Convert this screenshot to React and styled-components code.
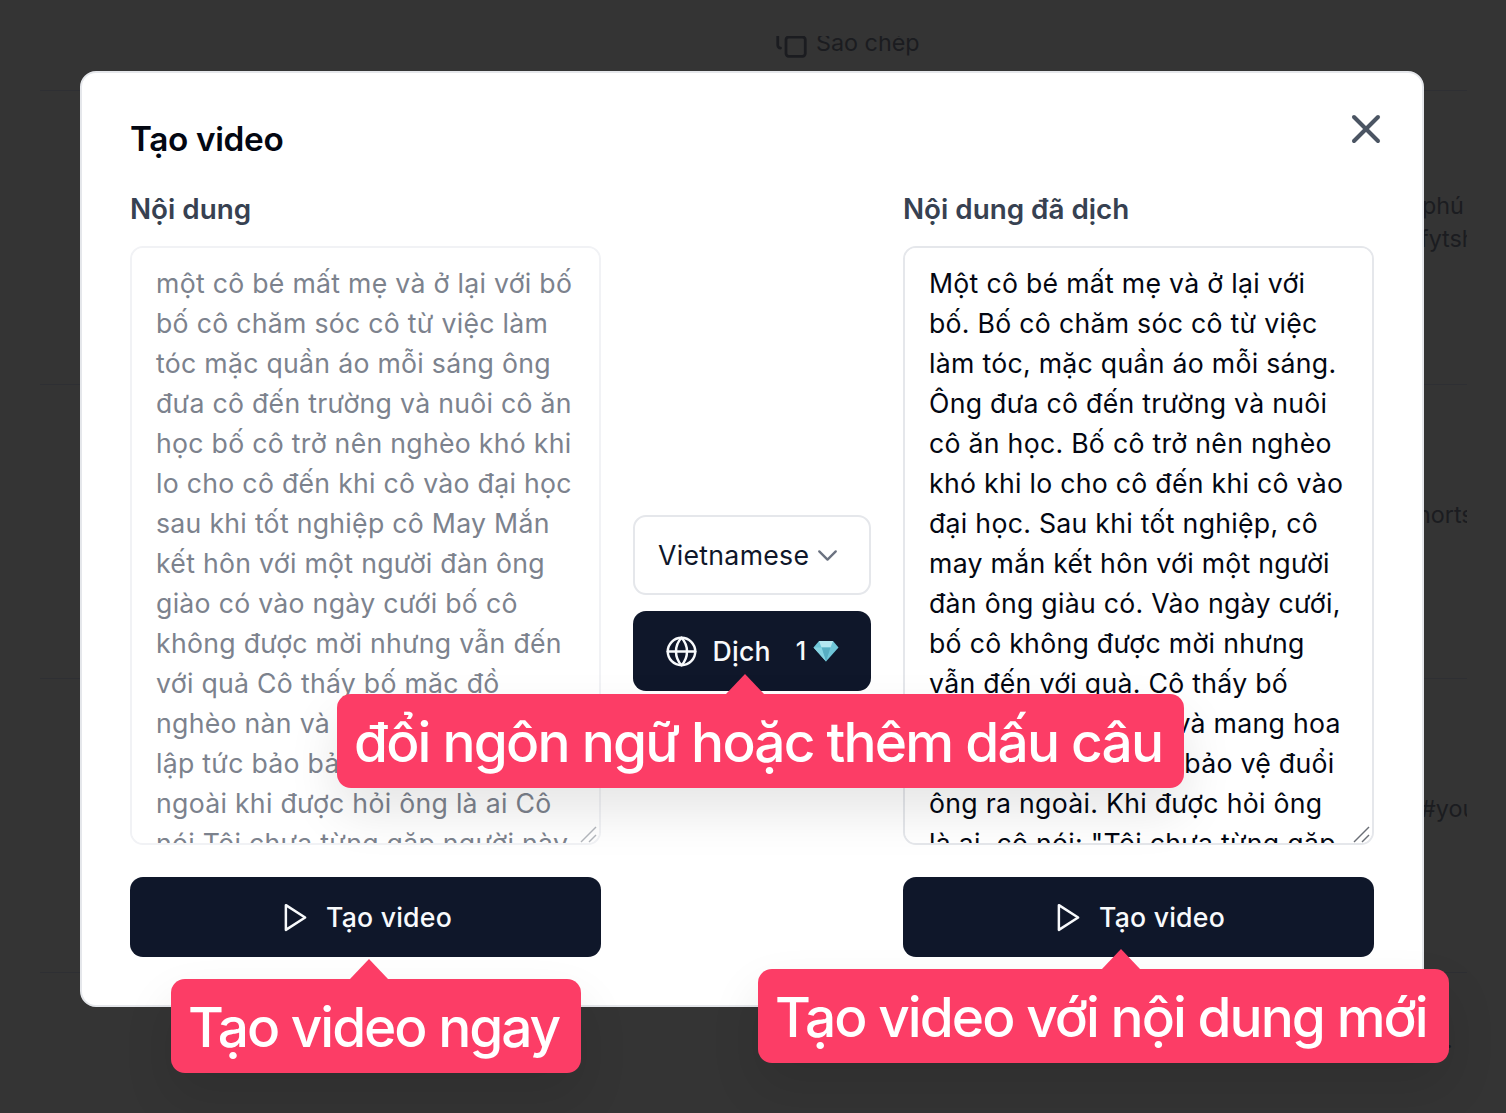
import React from 'react';
import styled, { createGlobalStyle } from 'styled-components';
import { ChevronDown, Copy, Globe, X } from 'lucide-react';

const sourceText =
  'một cô bé mất mẹ và ở lại với bố bố cô chăm sóc cô từ việc làm tóc mặc quần áo mỗi sáng ông đưa cô đến trường và nuôi cô ăn học bố cô trở nên nghèo khó khi lo cho cô đến khi cô vào đại học sau khi tốt nghiệp cô May Mắn kết hôn với một người đàn ông giào có vào ngày cưới bố cô không được mời nhưng vẫn đến với quả Cô thấy bố mặc đồ nghèo nàn và mang hoa đến\nlập tức bảo bảo vệ đuổi ông ra ngoài khi được hỏi ông là ai Cô nói Tôi chưa từng gặp người này';

const translatedText =
  'Một cô bé mất mẹ và ở lại với bố. Bố cô chăm sóc cô từ việc làm tóc, mặc quần áo mỗi sáng. Ông đưa cô đến trường và nuôi cô ăn học. Bố cô trở nên nghèo khó khi lo cho cô đến khi cô vào đại học. Sau khi tốt nghiệp, cô may mắn kết hôn với một người đàn ông giàu có. Vào ngày cưới, bố cô không được mời nhưng vẫn đến với quà. Cô thấy bố mặc đồ nghèo nàn và mang hoa đến, cô lập tức bảo bảo vệ đuổi ông ra ngoài. Khi được hỏi ông là ai, cô nói: "Tôi chưa từng gặp người này"';

const PlayIcon = () => (
  <svg width="33" height="33" viewBox="0 0 24 24" fill="none" stroke="currentColor" strokeWidth="1.8" strokeLinejoin="round">
    <polygon points="5 3 19 12 5 21 5 3" />
  </svg>
);

const DiamondIcon = () => (
  <svg width="26" height="22" viewBox="0 0 26 22">
    <polygon points="6,1 20,1 25.5,7.5 13,21.5 0.5,7.5" fill="#6fc6d8" />
    <polygon points="6,1 20,1 17.5,7.5 8.5,7.5" fill="#b4e6ef" />
    <polygon points="8.5,7.5 17.5,7.5 13,21.5" fill="#58aec2" />
    <polygon points="0.5,7.5 8.5,7.5 13,21.5" fill="#86d4e2" />
  </svg>
);

const ResizeGrip = ({ color }) => (
  <GripMark width="18" height="18" viewBox="0 0 18 18" stroke={color} strokeWidth="1.4">
    <line x1="1" y1="17" x2="16" y2="2" />
    <line x1="9" y1="17" x2="16" y2="10" />
  </GripMark>
);

const App = () => {
  return (
    <Page>
      <GlobalStyle />
      <Backdrop>
        <CopyRow>
          <CopyAction>
            <Copy size={33} strokeWidth={2} />
            Sao chép
          </CopyAction>
        </CopyRow>
        <BackdropRow>
          <BackdropCell $top={98}>
            <BackdropLine $indent={-2}>phú</BackdropLine>
            <BackdropLine $indent={-4}>fytsh</BackdropLine>
          </BackdropCell>
        </BackdropRow>
        <BackdropRow>
          <BackdropCell $top={113}>
            <BackdropLine $indent={-7}>horts</BackdropLine>
          </BackdropCell>
        </BackdropRow>
        <BackdropRow>
          <BackdropCell $top={113}>
            <BackdropLine $indent={-3}>#you</BackdropLine>
          </BackdropCell>
        </BackdropRow>
        <LastRow>
          <BackdropCell $top={50}>
            <BackdropLine $indent={22}>.</BackdropLine>
          </BackdropCell>
        </LastRow>
      </Backdrop>

      <Modal>
        <CloseButton aria-label="Đóng">
          <X size={48} strokeWidth={2} />
        </CloseButton>
        <Title>Tạo video</Title>
        <Columns>
          <Column>
            <Label>Nội dung</Label>
            <TextWrap>
              <TextBox $muted disabled value={sourceText} readOnly />
              <ResizeGrip color="#b4b7bd" />
            </TextWrap>
            <DarkButton>
              <PlayIcon />
              <ButtonText>Tạo video</ButtonText>
            </DarkButton>
          </Column>
          <MiddleColumn>
            <LanguageSelect>
              Vietnamese
              <ChevronDown size={33} strokeWidth={1.7} color="#6b7280" />
            </LanguageSelect>
            <DarkButton>
              <Globe size={33} strokeWidth={1.8} />
              <TranslateText>Dịch</TranslateText>
              <Cost>1</Cost>
              <DiamondIcon />
            </DarkButton>
          </MiddleColumn>
          <Column>
            <Label>Nội dung đã dịch</Label>
            <TextWrap>
              <TextBox value={translatedText} readOnly />
              <ResizeGrip color="#6b6f76" />
            </TextWrap>
            <DarkButton>
              <PlayIcon />
              <ButtonText>Tạo video</ButtonText>
            </DarkButton>
          </Column>
        </Columns>
      </Modal>

      <Callout $left={337} $top={694} $arrow={408} $tracking={-1.8}>đổi ngôn ngữ hoặc thêm dấu câu</Callout>
      <Callout $left={171} $top={979} $arrow={198} $tracking={-2.05}>Tạo video ngay</Callout>
      <Callout $left={758} $top={969} $arrow={363} $tracking={-1.95}>Tạo video với nội dung mới</Callout>
    </Page>
  );
};

export default App;

const GlobalStyle = createGlobalStyle`
  html, body {
    margin: 0;
    padding: 0;
    background: #343434;
  }
  * {
    box-sizing: border-box;
  }
`;

const Page = styled.div`
  position: relative;
  width: 1506px;
  height: 1113px;
  overflow: hidden;
  background: #343434;
  font-family: Inter, 'Noto Sans', sans-serif;
`;

const Backdrop = styled.div`
  display: flex;
  flex-direction: column;
  padding: 36px 39px 0 40px;
  color: #1b1c20;
  font-size: 23.33px;
  line-height: 33px;
`;

const CopyRow = styled.div`
  height: 55px;
  overflow: hidden;
  border-bottom: 1px solid #2e2f33;
`;

const CopyAction = styled.div`
  display: flex;
  align-items: center;
  gap: 8px;
  margin: -10px 0 0 735px;
`;

const BackdropRow = styled.div`
  display: flex;
  justify-content: flex-end;
  height: 294px;
  border-bottom: 1px solid #2e2f33;
`;

const LastRow = styled(BackdropRow)`
  border-bottom: 0;
`;

const BackdropCell = styled.div`
  width: 43px;
  padding-top: ${(p) => p.$top}px;
  overflow: hidden;
  white-space: nowrap;
`;

const BackdropLine = styled.div`
  margin-left: ${(p) => p.$indent}px;
`;

const Modal = styled.div`
  position: absolute;
  left: 80px;
  top: 71px;
  width: 1344px;
  height: 936px;
  padding: 48px;
  background: #fff;
  border: 2px solid #e5e7eb;
  border-radius: 16px;
`;

const CloseButton = styled.button`
  position: absolute;
  top: 32px;
  right: 32px;
  display: flex;
  padding: 0;
  border: 0;
  background: none;
  color: #4b5563;
`;

const Title = styled.h2`
  margin: 0;
  color: #030712;
  font-size: 33.33px;
  font-weight: 600;
  line-height: 36px;
  letter-spacing: -0.35px;
`;

const Columns = styled.div`
  display: grid;
  grid-template-columns: 471px 238px 471px;
  gap: 32px;
  margin-top: 32px;
`;

const Column = styled.div`
  display: flex;
  flex-direction: column;
`;

const MiddleColumn = styled.div`
  display: flex;
  flex-direction: column;
  justify-content: center;
  gap: 16px;
  padding-top: 60px;
`;

const Label = styled.label`
  margin-bottom: 17px;
  color: #374151;
  font-size: 27.8px;
  font-weight: 600;
  line-height: 40px;
`;

const TextWrap = styled.div`
  position: relative;
  margin-bottom: 32px;
`;

const GripMark = styled.svg`
  position: absolute;
  right: 3px;
  bottom: 2px;
`;

const TextBox = styled.textarea`
  display: block;
  width: 100%;
  height: 599px;
  padding: 15px 24px;
  border: 2px solid ${(p) => (p.$muted ? '#f1f2f5' : '#e5e7eb')};
  border-radius: 13px;
  outline: none;
  background: #fff;
  color: ${(p) => (p.$muted ? '#7c828d' : '#030712')};
  -webkit-text-fill-color: ${(p) => (p.$muted ? '#7c828d' : '#030712')};
  opacity: 1;
  font-family: inherit;
  font-size: 26.67px;
  line-height: 40px;
  letter-spacing: 0.28px;
  resize: none;
  scrollbar-width: none;
`;

const DarkButton = styled.button`
  display: flex;
  align-items: center;
  justify-content: center;
  width: 100%;
  height: 80px;
  padding: 0;
  border: 0;
  border-radius: 13px;
  background: #0f172a;
  color: #f8fafc;
  font-family: inherit;
  font-size: 26.67px;
  font-weight: 500;
  line-height: 40px;
  letter-spacing: 0.2px;
`;

const ButtonText = styled.span`
  margin-left: 14px;
`;

const TranslateText = styled.span`
  margin-left: 15px;
`;

const Cost = styled.span`
  margin: 0 7px 0 25px;
  font-size: 25px;
`;

const LanguageSelect = styled.div`
  display: flex;
  align-items: center;
  gap: 2px;
  height: 80px;
  padding: 0 0 0 23px;
  border: 2px solid #e5e7eb;
  border-radius: 13px;
  background: #fff;
  color: #0f172a;
  font-size: 26.67px;
  line-height: 40px;
  letter-spacing: 0.3px;
`;

const Callout = styled.div`
  position: absolute;
  left: ${(p) => p.$left}px;
  top: ${(p) => p.$top}px;
  height: 94px;
  padding: 0 22px 0 17px;
  border-radius: 14px;
  background: #fc3d66;
  box-shadow: 0 24px 50px rgba(0, 0, 0, 0.1);
  color: #fff;
  font-size: 55px;
  font-weight: 500;
  line-height: 96px;
  letter-spacing: ${(p) => p.$tracking}px;
  white-space: nowrap;

  &::before {
    content: '';
    position: absolute;
    left: ${(p) => p.$arrow - 19}px;
    top: -20px;
    border-left: 19px solid transparent;
    border-right: 19px solid transparent;
    border-bottom: 20px solid #fc3d66;
  }
`;
